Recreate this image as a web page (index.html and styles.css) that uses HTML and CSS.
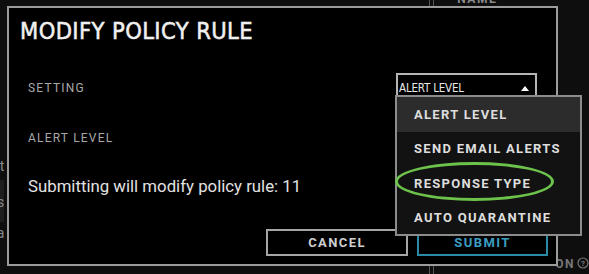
FILE: index.html
```html
<!DOCTYPE html>
<html>
<head>
<meta charset="utf-8">
<link rel="stylesheet" href="styles.css">
</head>
<body>
<div class="bg">
  <div class="bg-left">
    <div class="bg-row">Agent</div>
    <div class="bg-row bg-row-alt">Policies</div>
    <div class="bg-row">Data</div>
  </div>
  <div class="bg-main">
    <div class="bg-head">
      <span class="bg-divider"></span>
      <span class="bg-name">NAME</span>
    </div>
    <div class="bg-foot">
      <span class="bg-divider bg-divider-foot"></span>
      <span class="bg-action">ON</span>
      <svg class="help" width="12" height="12" viewBox="0 0 12 12"><circle cx="6" cy="6" r="5" fill="none" stroke="#777" stroke-width="1.2"/><text x="6" y="9" text-anchor="middle" font-size="8" font-weight="700" fill="#777" font-family="Roboto, sans-serif">?</text></svg>
    </div>
  </div>
</div>

<div class="modal">
  <h1 class="title">MODIFY POLICY RULE</h1>
  <div class="setting-row">
    <span class="label label-setting">SETTING</span>
    <div class="select">
      <span class="select-value">ALERT LEVEL</span>
      <svg class="caret" width="8" height="5" viewBox="0 0 8 5"><polygon points="0,5 4,0 8,5" fill="#fff"/></svg>
    </div>
  </div>
  <div class="label label-alert">ALERT LEVEL</div>
  <p class="message">Submitting will modify policy rule: 11</p>
  <div class="footer">
    <button class="btn btn-cancel">CANCEL</button>
    <button class="btn btn-submit">SUBMIT</button>
  </div>
</div>

<ul class="menu">
  <li class="menu-item active">ALERT LEVEL</li>
  <li class="menu-item">SEND EMAIL ALERTS</li>
  <li class="menu-item">RESPONSE TYPE</li>
  <li class="menu-item">AUTO QUARANTINE</li>
</ul>
<div class="highlight"></div>
</body>
</html>
```
FILE: styles.css
```css
* { box-sizing: border-box; }
html, body { margin: 0; padding: 0; }
body {
  width: 589px;
  height: 274px;
  overflow: hidden;
  background: #0e0e0e;
  font-family: Roboto, "Liberation Sans", sans-serif;
  position: relative;
}

/* background page fragments */
.bg {
  display: flex;
  height: 274px;
}
.bg-left {
  width: 7px;
  overflow: hidden;
  padding-top: 155px;
  display: flex;
  flex-direction: column;
  align-items: flex-end;
}
.bg-row {
  width: 60px;
  text-align: right;
  color: #8a8a8a;
  font-size: 14px;
  line-height: 18px;
  height: 25px;
  padding-top: 2px;
  white-space: nowrap;
}
.bg-row-alt {
  background: #1e1e1e;
  height: 42px;
  padding-top: 13px;
}
.bg-main {
  flex: 1;
  display: flex;
  flex-direction: column;
  justify-content: space-between;
}
.bg-head {
  display: flex;
  align-items: flex-start;
  height: 6px;
  overflow: hidden;
  padding-left: 425px;
}
.bg-divider {
  width: 5px;
  height: 8px;
  border-left: 1px solid #555;
  border-right: 1px solid #555;
}
.bg-name {
  margin-left: 23px;
  margin-top: -7px;
  color: #8a8a8a;
  font-weight: 700;
  font-size: 12px;
  letter-spacing: 1.5px;
  line-height: 12px;
}
.bg-foot {
  display: flex;
  align-items: flex-start;
  height: 18px;
  padding-left: 425px;
}
.bg-divider-foot {
  margin-top: 9px;
  height: 9px;
}
.bg-action {
  margin-left: 121px;
  margin-top: 1px;
  color: #777;
  font-weight: 700;
  font-size: 12px;
  line-height: 14px;
  letter-spacing: 1.5px;
  white-space: nowrap;
}
.help {
  margin-left: 2px;
  margin-top: 1px;
  flex: none;
}

/* modal (overlay) */
.modal {
  position: absolute;
  left: 7px;
  top: 6px;
  width: 551px;
  height: 260px;
  background: #000;
  border: 2px solid #9c9c9c;
  padding: 9px 8px 0 11px;
  display: flex;
  flex-direction: column;
}
.title {
  margin: 0;
  font-family: "DejaVu Sans Condensed", sans-serif;
  font-weight: 400;
  font-size: 23.5px;
  line-height: 28px;
  color: #f0f0f0;
  letter-spacing: 0.4px;
  -webkit-text-stroke: 0.5px #f0f0f0;
}
.setting-row {
  margin-top: 28px;
  display: flex;
  justify-content: space-between;
  align-items: flex-start;
  padding-left: 8px;
  padding-right: 11px;
}
.label {
  color: #a8a8a8;
  font-size: 12px;
  letter-spacing: 1.2px;
  line-height: 16px;
}
.label-setting { margin-top: 7px; }
.select {
  width: 141px;
  height: 23px;
  border: 2px solid #b5b5b5;
  border-bottom: none;
  display: flex;
  justify-content: space-between;
  align-items: center;
  padding: 5px 6px 0 1px;
}
.select-value {
  color: #e8e8e8;
  font-family: "DejaVu Sans Condensed", sans-serif;
  font-size: 11.5px;
  letter-spacing: -0.2px;
}
.label-alert {
  margin-top: 34px;
  padding-left: 8px;
}
.message {
  margin: 29px 0 0 0;
  padding-left: 8px;
  color: #e2e2e2;
  font-size: 16.8px;
  line-height: 22px;
}
.footer {
  margin-top: 32px;
  display: flex;
  justify-content: flex-end;
  gap: 9px;
}
.btn {
  height: 27px;
  background: #000;
  font-family: Roboto, "Liberation Sans", sans-serif;
  font-weight: 700;
  font-size: 13px;
  letter-spacing: 1.4px;
  padding: 0;
}
.btn-cancel {
  width: 142px;
  border: 2px solid #a5a5a5;
  color: #cfcfcf;
}
.btn-submit {
  width: 131px;
  border: 2px solid #2b8aa6;
  color: #3b9dc0;
}

/* dropdown menu (overlay) */
.menu {
  position: absolute;
  left: 395px;
  top: 95px;
  width: 187px;
  height: 141px;
  margin: 0;
  padding: 0;
  list-style: none;
  background: #121212;
  border: 2px solid #8c8c8c;
}
.menu-item {
  height: 34.5px;
  display: flex;
  align-items: center;
  padding-left: 17px;
  color: #dedede;
  font-weight: 700;
  font-size: 13px;
  letter-spacing: 1.3px;
}
.menu-item.active { background: #2c2c2c; }

/* annotation */
.highlight {
  position: absolute;
  left: 395px;
  top: 162px;
  width: 159px;
  height: 39px;
  border: 3px solid #6cc24a;
  border-radius: 50%;
}
```
